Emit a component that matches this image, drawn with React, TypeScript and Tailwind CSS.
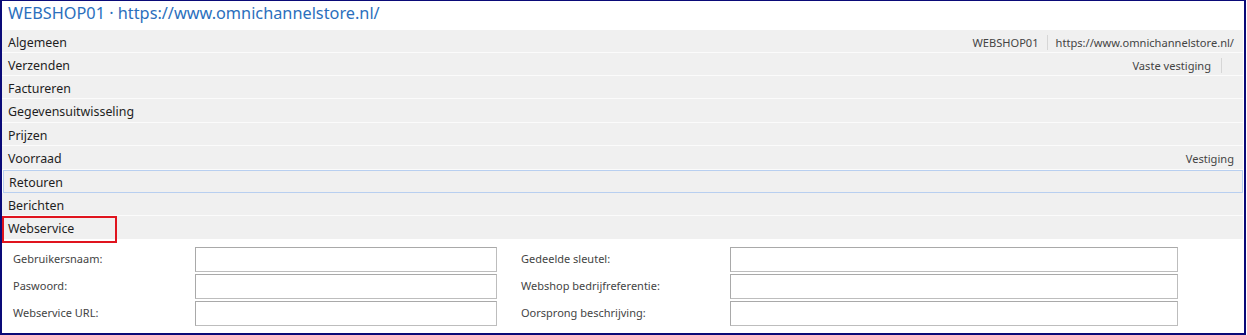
const rows: { label: string; h: string; right?: string[]; sepAfter?: boolean; focused?: boolean }[] = [
  { label: "Algemeen", h: "h-[23px]", right: ["WEBSHOP01", "https://www.omnichannelstore.nl/"] },
  { label: "Verzenden", h: "h-[23px]", right: ["Vaste vestiging"], sepAfter: true },
  { label: "Factureren", h: "h-[23px]" },
  { label: "Gegevensuitwisseling", h: "h-[24px]" },
  { label: "Prijzen", h: "h-[23px]" },
  { label: "Voorraad", h: "h-[24px]", right: ["Vestiging"] },
  { label: "Retouren", h: "h-[23px]", focused: true },
  { label: "Berichten", h: "h-[23px]" },
];

const Field = ({ label, inputWidth, labelWidth }: { label: string; inputWidth: string; labelWidth: string }) => (
  <div className="flex items-center h-[25px]">
    <div className={`${labelWidth} text-[11px] text-[#444]`}>{label}</div>
    <div className={`${inputWidth} h-[25px] bg-white border border-[#bdbdbd] border-t-[#a9a9a9] border-l-[#a9a9a9]`} />
  </div>
);

export default function App() {
  return (
    <div
      className="w-[1246px] h-[335px] bg-white border-2 border-t border-[#0a0a78] overflow-hidden"
      style={{ fontFamily: '"Noto Sans", "Open Sans", sans-serif' }}
    >
      <div className="h-[29px] pl-[6px] pb-[4px] flex items-center text-[16.3px] text-[#2b6fbd]">
        WEBSHOP01 · https://www.omnichannelstore.nl/
      </div>
      <div className="mr-[1px]">
        {rows.map((r) => (
          <div
            key={r.label}
            className={`${r.h} pt-[4px] flex items-center justify-between bg-[#f0f0f0] text-[12.4px] text-[#1e1e1e] ${
              r.focused ? "border border-[#b8cff0] ml-[1px]" : "border-b border-[#fbfbfb]"
            }`}
          >
            <span className={r.focused ? "pl-[5px]" : "pl-[6px]"}>{r.label}</span>
            {r.right && (
              <div className="flex items-center text-[11.1px] text-[#444] pr-[9px]">
                {r.right.map((t, i) => (
                  <span key={t} className="flex items-center">
                    {i > 0 && <span className="w-px h-[15px] bg-[#d6d6d6] mx-[8px]" />}
                    {t}
                  </span>
                ))}
                {r.sepAfter && <span className="w-px h-[15px] bg-[#d6d6d6] ml-[10px] mr-[12px]" />}
              </div>
            )}
          </div>
        ))}
        <div className="h-[23px] pt-[4px] flex items-center bg-[#f0f0f0] text-[12.4px] text-[#1e1e1e] relative">
          <span className="pl-[6px]">Webservice</span>
          <div className="absolute left-0 top-0 w-[115px] h-[27px] border-2 border-[#e0141e]" />
        </div>
      </div>
      <div className="pt-[8px] pl-[11px] flex">
        <div className="flex flex-col gap-[2px] w-[508px]">
          <Field label="Gebruikersnaam:" labelWidth="w-[182px]" inputWidth="w-[302px]" />
          <Field label="Paswoord:" labelWidth="w-[182px]" inputWidth="w-[302px]" />
          <Field label="Webservice URL:" labelWidth="w-[182px]" inputWidth="w-[302px]" />
        </div>
        <div className="flex flex-col gap-[2px]">
          <Field label="Gedeelde sleutel:" labelWidth="w-[209px]" inputWidth="w-[448px]" />
          <Field label="Webshop bedrijfreferentie:" labelWidth="w-[209px]" inputWidth="w-[448px]" />
          <Field label="Oorsprong beschrijving:" labelWidth="w-[209px]" inputWidth="w-[448px]" />
        </div>
      </div>
    </div>
  );
}
